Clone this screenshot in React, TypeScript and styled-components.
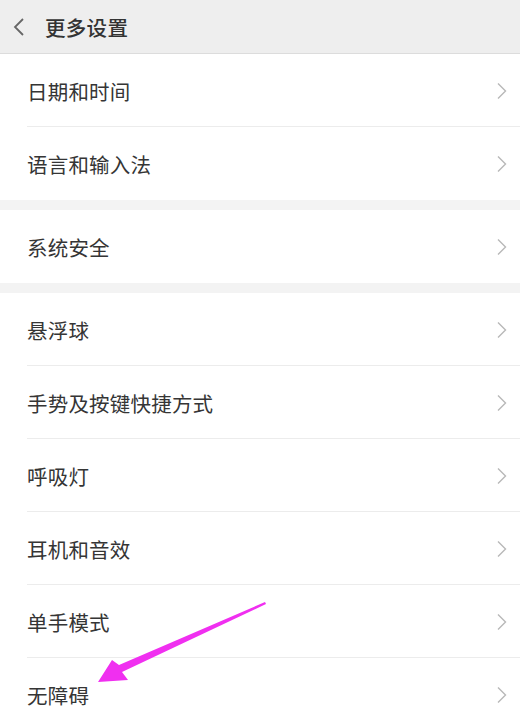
import React from "react";
import styled, { createGlobalStyle } from "styled-components";

const GlobalStyle = createGlobalStyle`
  html, body {
    margin: 0;
    padding: 0;
    background: #ffffff;
  }
  body {
    font-family: "Noto Sans CJK SC", "Noto Sans", sans-serif;
    -webkit-font-smoothing: antialiased;
  }
`;

const Page = styled.div`
  position: relative;
  width: 520px;
  height: 718px;
  overflow: hidden;
  background: #ffffff;
`;

const Header = styled.header`
  height: 53px;
  display: flex;
  align-items: center;
  background: #eeeeee;
  border-bottom: 1px solid #dcdcdc;
  padding-left: 12px;
  gap: 19px;
`;

const Title = styled.h1`
  margin: 0;
  font-size: 20.5px;
  font-weight: 500;
  color: #333333;
  letter-spacing: 0.3px;
`;

const Group = styled.section`
  background: #ffffff;
`;

const Gap = styled.div`
  height: 10px;
  background: #f3f3f3;
`;

const Row = styled.div<{ $last?: boolean }>`
  position: relative;
  height: 73px;
  display: flex;
  align-items: center;
  justify-content: space-between;
  padding: 0 12px 0 27px;

  &:after {
    content: "";
    display: ${(p) => (p.$last ? "none" : "block")};
    position: absolute;
    left: 27px;
    right: 0;
    bottom: 0;
    height: 1px;
    background: #ececec;
  }
`;

const Label = styled.span`
  font-size: 20.5px;
  color: #353535;
  letter-spacing: 0.2px;
`;

const Arrow = styled.svg`
  position: absolute;
  left: 0;
  top: 0;
  pointer-events: none;
`;

const BackIcon = () => (
  <svg width="14" height="20" viewBox="0 0 14 20">
    <polyline points="11,2 3,10 11,18" fill="none" stroke="#666" strokeWidth="1.8" />
  </svg>
);

const Chevron = () => (
  <svg width="12" height="18" viewBox="0 0 12 18">
    <polyline points="2,1.5 9.5,9 2,16.5" fill="none" stroke="#b8b8b8" strokeWidth="1.4" />
  </svg>
);

const groups: string[][] = [
  ["日期和时间", "语言和输入法"],
  ["系统安全"],
  ["悬浮球", "手势及按键快捷方式", "呼吸灯", "耳机和音效", "单手模式", "无障碍"],
];

export default function App() {
  return (
    <>
      <GlobalStyle />
      <Page>
        <Header>
          <BackIcon />
          <Title>更多设置</Title>
        </Header>
        {groups.map((items, gi) => (
          <React.Fragment key={gi}>
            {gi > 0 && <Gap />}
            <Group>
              {items.map((item, i) => (
                <Row key={item} $last={i === items.length - 1}>
                  <Label>{item}</Label>
                  <Chevron />
                </Row>
              ))}
            </Group>
          </React.Fragment>
        ))}
        <Arrow width="520" height="718" viewBox="0 0 520 718">
          <polygon
            points="265,602 119,665 112,660 98,682 128,680 122,672 266,604"
            fill="#f02ff0"
          />
        </Arrow>
      </Page>
    </>
  );
}
